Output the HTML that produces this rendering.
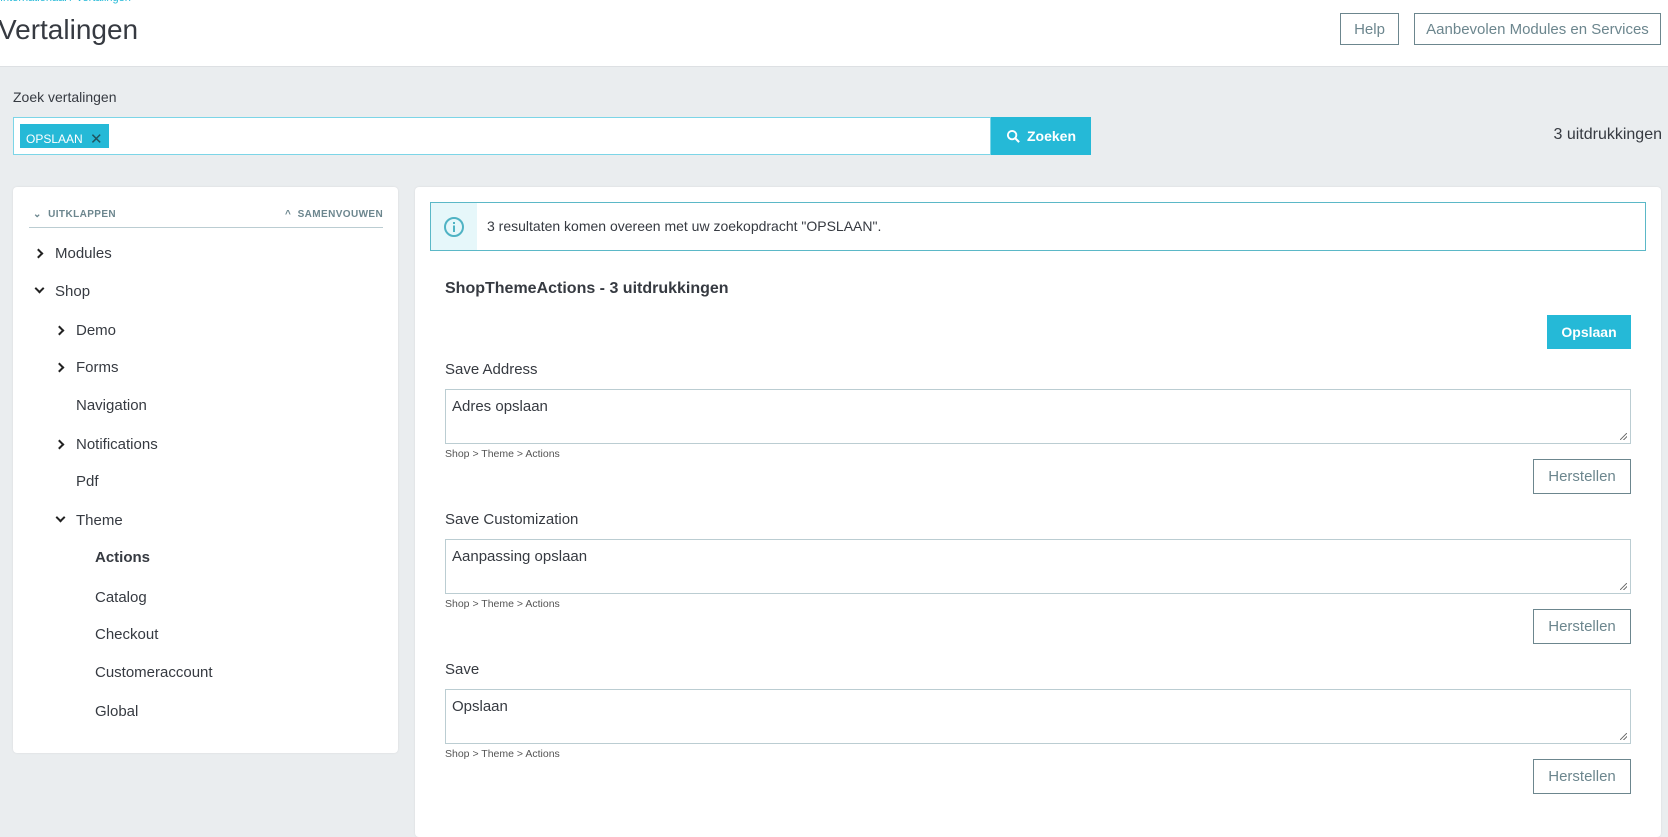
<!DOCTYPE html>
<html><head><meta charset="utf-8"><style>
*{box-sizing:border-box;margin:0;padding:0}
body{width:1668px;height:814px;overflow:hidden;background:#eaedef;font-family:"Liberation Sans",sans-serif;color:#363a41;position:relative}
.a{position:absolute}
.hdr{left:0;top:0;width:1668px;height:67px;background:#fff;border-bottom:1px solid #dde0e3}
.btn-o{border:1px solid #6c868e;color:#6c868e;background:#fff;font-size:15px;display:flex;align-items:center;justify-content:center}
.card{background:#fff;border-radius:4px;box-shadow:0 0 2px rgba(0,0,0,.08)}
.t{font-size:15px;white-space:nowrap}
.chev{width:7px;height:7px;border-right:2px solid #222;border-bottom:2px solid #222}
.ta{border:1px solid #bbcdd2;background:#fff;font-size:15px;padding:8px 6px}
.ta:after{content:"";position:absolute;right:3px;bottom:3px;width:7px;height:7px;background:linear-gradient(135deg,transparent 45%,#777 46%,#777 54%,transparent 55%,transparent 70%,#777 71%,#777 79%,transparent 80%)}
.bc{font-size:10.5px;color:#555}
.lbl{font-size:15px}
</style></head><body>
<div class="a hdr"></div>
<div class="a" style="left:0;top:-8px;font-size:11px;color:#25b9d7">Internationaal / Vertalingen</div>
<div class="a" style="left:-2px;top:14px;font-size:28px;color:#363a41">Vertalingen</div>
<div class="a btn-o" style="left:1340px;top:13px;width:59px;height:32px">Help</div>
<div class="a btn-o" style="left:1414px;top:13px;width:247px;height:32px">Aanbevolen Modules en Services</div>

<div class="a" style="left:13px;top:89px;font-size:14px">Zoek vertalingen</div>
<div class="a" style="left:13px;top:117px;width:978px;height:38px;background:#fff;border:1px solid #7cd5e7"></div>
<div class="a" style="left:20px;top:124px;width:89px;height:24px;background:#25b9d7;color:#fff;font-size:12px;padding:5px 0 0 6px">OPSLAAN <span style="font-size:15px;color:#20545f;margin-left:4px;position:relative;top:1px">✕</span></div>
<div class="a" style="left:991px;top:117px;width:100px;height:38px;background:#25b9d7;color:#fff;font-weight:bold;font-size:14px;display:flex;align-items:center;justify-content:center">
<svg width="15" height="15" viewBox="0 0 16 16" style="margin-right:6px"><circle cx="6.5" cy="6.5" r="4.5" fill="none" stroke="#fff" stroke-width="2"/><path d="M10 10l4 4" stroke="#fff" stroke-width="2.2"/></svg>Zoeken</div>
<div class="a" style="right:6px;top:126px;font-size:16px">3 uitdrukkingen</div>

<div class="a card" style="left:13px;top:187px;width:385px;height:566px"></div>
<div class="a" style="left:33px;top:209px;font-size:10px;font-weight:bold;color:#6c868e;letter-spacing:.4px">⌄&nbsp; UITKLAPPEN</div>
<div class="a" style="left:285px;top:209px;font-size:10px;font-weight:bold;color:#6c868e;letter-spacing:.4px">^&nbsp; SAMENVOUWEN</div>
<div class="a" style="left:29px;top:227px;width:354px;height:1px;background:#bbcdd2"></div>

<div class="a chev" style="left:35px;top:250px;transform:rotate(-45deg)"></div><div class="a t" style="left:55px;top:245px">Modules</div>
<div class="a chev" style="left:36px;top:285px;transform:rotate(45deg)"></div><div class="a t" style="left:55px;top:283px">Shop</div>
<div class="a chev" style="left:56px;top:327px;transform:rotate(-45deg)"></div><div class="a t" style="left:76px;top:322px">Demo</div>
<div class="a chev" style="left:56px;top:364px;transform:rotate(-45deg)"></div><div class="a t" style="left:76px;top:359px">Forms</div>
<div class="a t" style="left:76px;top:397px">Navigation</div>
<div class="a chev" style="left:56px;top:441px;transform:rotate(-45deg)"></div><div class="a t" style="left:76px;top:436px">Notifications</div>
<div class="a t" style="left:76px;top:473px">Pdf</div>
<div class="a chev" style="left:57px;top:514px;transform:rotate(45deg)"></div><div class="a t" style="left:76px;top:512px">Theme</div>
<div class="a t" style="left:95px;top:549px;font-weight:bold">Actions</div>
<div class="a t" style="left:95px;top:589px">Catalog</div>
<div class="a t" style="left:95px;top:626px">Checkout</div>
<div class="a t" style="left:95px;top:664px">Customeraccount</div>
<div class="a t" style="left:95px;top:703px">Global</div>

<div class="a card" style="left:415px;top:187px;width:1246px;height:650px"></div>
<div class="a" style="left:430px;top:202px;width:1216px;height:49px;border:1px solid #5bb8c7;background:#fff"></div>
<div class="a" style="left:431px;top:203px;width:46px;height:47px;background:#e6f7fa;display:flex;align-items:center;justify-content:center">
<svg width="22" height="22" viewBox="0 0 22 22"><circle cx="11" cy="11" r="9" fill="none" stroke="#4fb3c4" stroke-width="2"/><rect x="10" y="9.5" width="2" height="6.5" fill="#4fb3c4"/><rect x="10" y="6" width="2" height="2" fill="#4fb3c4"/></svg></div>
<div class="a" style="left:487px;top:218px;font-size:14px">3 resultaten komen overeen met uw zoekopdracht "OPSLAAN".</div>
<div class="a" style="left:445px;top:280px;font-size:16px;font-weight:bold">ShopThemeActions - 3 uitdrukkingen</div>
<div class="a" style="left:1547px;top:315px;width:84px;height:34px;background:#25b9d7;color:#fff;font-weight:bold;font-size:14px;display:flex;align-items:center;justify-content:center">Opslaan</div>

<div class="a lbl" style="left:445px;top:361px">Save Address</div>
<div class="a ta" style="left:445px;top:389px;width:1186px;height:55px">Adres opslaan</div>
<div class="a bc" style="left:445px;top:448px">Shop &gt; Theme &gt; Actions</div>
<div class="a btn-o" style="left:1533px;top:459px;width:98px;height:35px">Herstellen</div>

<div class="a lbl" style="left:445px;top:511px">Save Customization</div>
<div class="a ta" style="left:445px;top:539px;width:1186px;height:55px">Aanpassing opslaan</div>
<div class="a bc" style="left:445px;top:598px">Shop &gt; Theme &gt; Actions</div>
<div class="a btn-o" style="left:1533px;top:609px;width:98px;height:35px">Herstellen</div>

<div class="a lbl" style="left:445px;top:661px">Save</div>
<div class="a ta" style="left:445px;top:689px;width:1186px;height:55px">Opslaan</div>
<div class="a bc" style="left:445px;top:748px">Shop &gt; Theme &gt; Actions</div>
<div class="a btn-o" style="left:1533px;top:759px;width:98px;height:35px">Herstellen</div>
</body></html>
